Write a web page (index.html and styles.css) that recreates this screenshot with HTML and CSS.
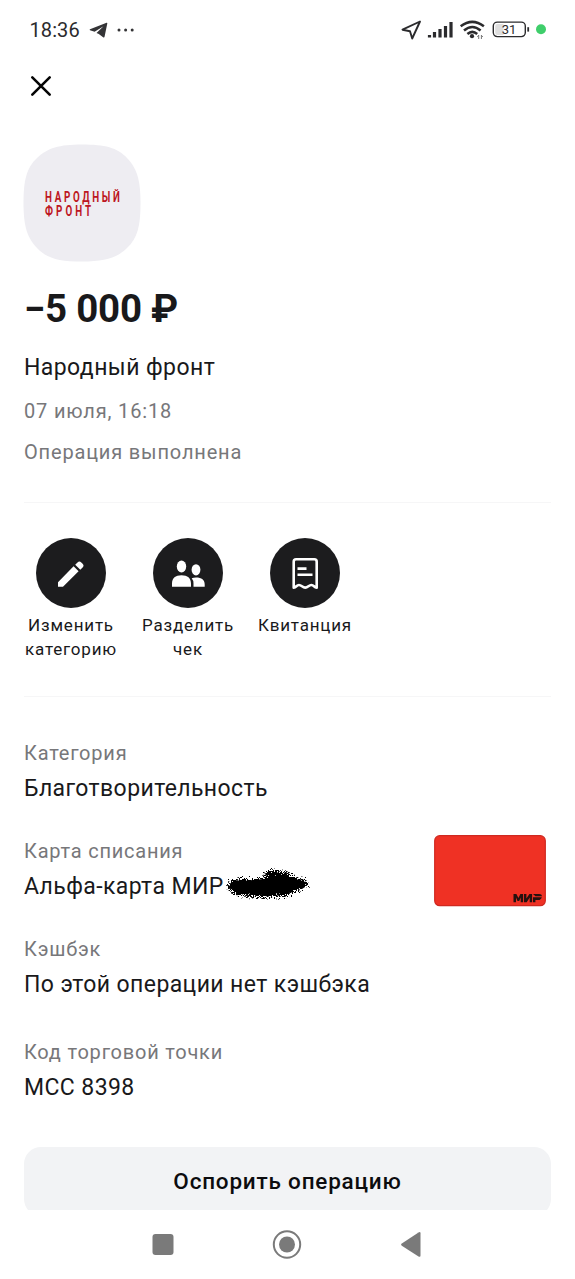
FILE: index.html
```html
<!DOCTYPE html>
<html lang="ru">
<head>
<meta charset="utf-8">
<meta name="viewport" content="width=device-width, initial-scale=1">
<title>Операция</title>
<link rel="stylesheet" href="styles.css">
</head>
<body>
<div class="screen">
  <header class="status">
    <span class="time">18:36</span>
    <svg class="telegram" width="19" height="17" viewBox="0 0 19 17"><path d="M1 7.2 17.6.8q.8-.2.7.7L15.6 14.6q-.3 1.6-1.5.7L9.8 12 7.500 11 14.5 4.2 5.6 9.7 1 8.3q-.8-.5 0-1.1Z" fill="#343436"/></svg>
    <svg class="dots" width="18" height="4" viewBox="0 0 18 4" fill="#343436"><circle cx="2" cy="2" r="1.5"/><circle cx="8.6" cy="2" r="1.5"/><circle cx="15.2" cy="2" r="1.5"/></svg>
    <svg class="signals" width="150" height="24" viewBox="400 18 150 24">
      <path d="M420 21.5 402.500 29.700 410 31.200 412.200 38.500Z" fill="none" stroke="#2b2b2d" stroke-width="1.9" stroke-linejoin="round"/>
      <path d="M429.500 37.500v-2.500M434.500 37.500v-5.500M440 37.500v-8.500M445.500 37.500v-11.500M451 37.500v-15.500" fill="none" stroke="#2b2b2d" stroke-width="3.200"/>
      <g fill="none" stroke="#2b2b2d" stroke-width="2.500"><path d="M460.700 26.300Q472.300 17.400 483.900 26.300M464 30.500Q472.300 23.500 480.600 30.500M467.400 34Q472.300 29.700 477.200 34"/></g>
      <circle cx="472" cy="36.200" r="2.100" fill="#2b2b2d"/>
      <path d="M478.700 35v4M477.300 36.800l1.400-1.600M481.400 39v-4M482.800 37l-1.400-1.700" stroke="#777" stroke-width="1" fill="none"/>
      <rect x="493.300" y="22.100" width="32" height="14.500" rx="4" fill="#fff" stroke="#2b2b2d" stroke-width="1.400"/>
      <path d="M497.500 24h6v11h-6q-2.300 0-2.300-2.300v-6.400q0-2.300 2.300-2.300Z" fill="#dedede"/>
      <path d="M528.200 27.200v4.400" stroke="#2b2b2d" stroke-width="1.800"/>
      <text x="509" y="34" class="battery">31</text>
      <circle cx="541" cy="29.300" r="5" fill="#3fce6b"/>
    </svg>
  </header>

  <nav class="topbar">
    <svg width="22" height="22" viewBox="0 0 22 22"><path d="M2.300 2.300 19.700 19.700M19.700 2.300 2.300 19.700" stroke="#050505" stroke-width="2.600" stroke-linecap="round"/></svg>
  </nav>

  <main class="content">
    <svg class="logo" width="118" height="118" viewBox="0 0 118 118">
      <path d="M59 .5C82 .5 94 3.500 104 14S117.500 36 117.500 59 114.500 94 104 104 82 117.500 59 117.500 24 114.500 14 104 .5 82 .5 59 3.500 24 14 14 36 .5 59 .5Z" fill="#eeedf2"/>
      <g transform="scale(.7 1)" class="logo-text"><text x="31.400" y="58" textLength="107">НАРОДНЫЙ</text><text x="31.400" y="72" textLength="66">ФРОНТ</text></g>
    </svg>
    <h1 class="amount">−5 000 ₽</h1>
    <div class="merchant">Народный фронт</div>
    <div class="meta">07 июля, 16:18</div>
    <div class="meta">Операция выполнена</div>

    <section class="actions">
      <div class="action">
        <svg width="70" height="70" viewBox="0 0 70 70"><circle cx="35" cy="35" r="35" fill="#1c1c1e"/><path d="M22 44.200 37.600 28.200 42.600 33.200 27 48.800H22ZM39.200 26.700l2.300-2.300q1.900-1.900 3.800 0l1.300 1.300q1.900 1.900 0 3.800L44.300 31.800Z" fill="#fff"/></svg>
        <span>Изменить категорию</span>
      </div>
      <div class="action">
        <svg width="70" height="70" viewBox="0 0 70 70"><circle cx="35" cy="35" r="35" fill="#1c1c1e"/><g fill="#fff"><ellipse cx="28.500" cy="28.500" rx="4.700" ry="6"/><ellipse cx="43" cy="31.800" rx="4.400" ry="5.600"/><path d="M19 48.700v-2.900C19 40 22.500 37.300 28.500 37.300S38 40 38 45.800v2.900ZM40.500 48.700v-3.200q0-3.300-1.800-5.300 1.800-.8 4.300-.8c5.700 0 8.700 2.200 8.700 7v2.300Z"/></g></svg>
        <span>Разделить чек</span>
      </div>
      <div class="action">
        <svg width="70" height="70" viewBox="0 0 70 70"><circle cx="35" cy="35" r="35" fill="#1c1c1e"/><path d="M23.700 49.700V23.700q0-2.400 2.400-2.400H44.300q2.400 0 2.400 2.400V49.700C44 49.500 44 47 41.400 47S38 49.600 35.200 49.600 31.600 47 29 47 26.400 49.500 23.700 49.700Z" fill="none" stroke="#fff" stroke-width="2.600" stroke-linejoin="round"/><path d="M27.500 30.600h9M27.500 36.700h15" stroke="#fff" stroke-width="2.600"/></svg>
        <span>Квитанция</span>
      </div>
    </section>

    <section class="details">
      <div class="field">
        <div class="label">Категория</div>
        <div class="value">Благотворительность</div>
      </div>
      <div class="field card-field">
        <div>
          <div class="label">Карта списания</div>
          <div class="value masked">Альфа-карта МИР
            <svg class="scribble" width="90" height="36" viewBox="0 0 90 36">
              <defs><filter id="rough" x="-10%" y="-20%" width="120%" height="140%"><feTurbulence type="fractalNoise" baseFrequency=".95" numOctaves="2" seed="7"/><feDisplacementMap in="SourceGraphic" scale="13" xChannelSelector="R" yChannelSelector="G"/></filter></defs>
              <path d="M9 15 20 14 40 12 62 10 80 14 82 19 68 24 40 25 14 23 5 21Z"/>
              <path filter="url(#rough)" d="M4 21 8 13 18 12 30 12 42 12 41 6 49 3 62 5 72 11 82 13 85 18 79 22 71 25 62 30 48 29 39 31 25 29 14 28 9 25Z"/>
            </svg>
          </div>
        </div>
        <svg class="card" width="112" height="72" viewBox="0 0 112 72"><rect x=".7" y=".7" width="110.600" height="70" rx="5" fill="#ef3124" stroke="#cf2920" stroke-width="1.200"/><path d="M79.500 67.200v-8.200h2.900l2 4 2-4h2.700v8.200h-2.400v-4.600L85.200 66h-1.700l-1.500-3.400v4.600ZM90 67.200v-8.200h2.400v4.600l3-4.600h2.700v8.200h-2.400v-4.600l-3 4.600ZM99 67.200v-5h8.800q-.8 2.800-3.500 2.800h-2.900v2.200ZM99 59h6.200q2.600 0 2.900 2.300h-6.600Z" fill="#25110f"/></svg>
      </div>
      <div class="field">
        <div class="label">Кэшбэк</div>
        <div class="value">По этой операции нет кэшбэка</div>
      </div>
      <div class="field code">
        <div class="label">Код торговой точки</div>
        <div class="value">MCC 8398</div>
      </div>
    </section>

    <div class="dispute-clip"><button class="dispute">Оспорить операцию</button></div>
  </main>

  <footer class="system">
    <svg width="270" height="32" viewBox="152 1228 270 32" fill="#7a7a7a"><rect x="152.500" y="1234" width="21" height="21" rx="3"/><circle cx="287" cy="1244.500" r="13.200" fill="none" stroke="#7a7a7a" stroke-width="2"/><circle cx="287" cy="1244.500" r="8"/><path d="M401.800 1243.500 418.500 1232.500q2-1.200 2 .8V1255.500q0 2-2 .9L401.800 1245.700q-1.600-1.100 0-2.200Z"/></svg>
  </footer>
</div>
</body>
</html>
```
FILE: styles.css
```css
* { box-sizing: border-box; }
body { margin: 0; background: #fff; font-family: Roboto, "Noto Sans", sans-serif; color: #19191b; }
.screen { height: 1279px; display: flex; flex-direction: column; overflow: hidden; }
svg { display: block; flex: none; }
.status { height: 60px; padding: 0 25px 0 29.5px; display: flex; align-items: center; }
.time { font-size: 20px; letter-spacing: .1px; color: #2b2b2d; }
.telegram { margin-left: 9px; }
.dots { margin-left: 9px; }
.signals { margin-left: auto; }
.battery { font-size: 13px; text-anchor: middle; fill: #2b2b2d; }
.topbar { height: 84px; padding: 15px 30px; }
.content { padding: 0 24px; display: flex; flex-direction: column; }
.logo { margin-left: -1px; }
.logo-text { font-size: 14px; font-weight: 700; fill: #bd1622; }
.amount { margin: 24px 0 0; font-size: 38.5px; line-height: 46px; font-weight: 700; letter-spacing: -.25px; }
.merchant { margin-top: 21px; font-size: 23px; line-height: 30px; letter-spacing: .43px; }
.meta { margin-top: 15px; font-size: 20px; line-height: 26px; letter-spacing: .83px; color: #77777a; }
.actions { margin-top: 37px; height: 195px; padding: 36px 0 0; border-top: 1px solid #f6f6f7; border-bottom: 1px solid #f6f6f7; display: flex; gap: 23px; margin-left: -.5px; }
.action { width: 94px; display: flex; flex-direction: column; align-items: center; font-size: 17px; line-height: 24px; letter-spacing: .8px; text-align: center; }
.action svg { margin-top: -1px; }
.action span { margin-top: 5px; padding-left: 1px; }
.details { padding-top: 42px; display: flex; flex-direction: column; gap: 33px; }
.label { font-size: 20px; line-height: 28px; letter-spacing: .78px; color: #77777a; }
.value { margin-top: 7px; font-size: 23px; line-height: 30px; letter-spacing: .4px; }
.code { margin-top: 5px; }
.card-field { display: flex; justify-content: space-between; }
.card { margin: -2px 5px -5px 0; }
.masked { position: relative; }
.scribble { position: absolute; left: 199px; top: -5px; }
.dispute-clip { margin-top: 44px; height: 63px; overflow: hidden; }
.dispute { display: block; width: 100%; height: 69px; border: 0; border-radius: 17px; background: #f2f3f5; font: 500 22.500px/69px Roboto, sans-serif; letter-spacing: .8px; color: #0c0c0e; padding: 0; }
.system { margin-top: auto; height: 69px; display: flex; justify-content: center; padding: 18px 2px 0 0; }
```
